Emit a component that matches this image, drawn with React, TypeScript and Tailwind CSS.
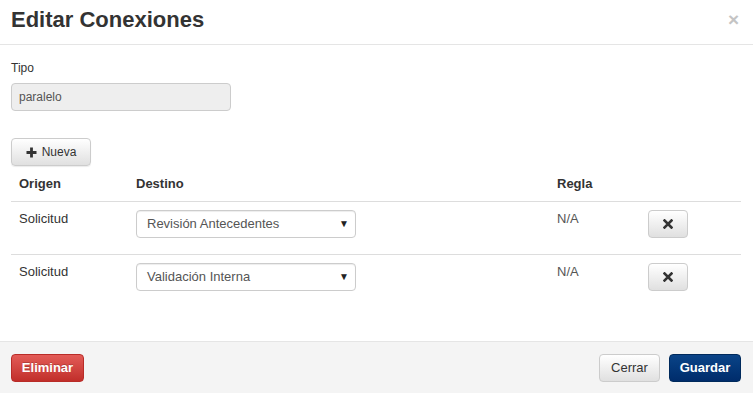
import React from 'react';

const rows = [
  { origen: 'Solicitud', destino: 'Revisión Antecedentes', regla: 'N/A' },
  { origen: 'Solicitud', destino: 'Validación Interna', regla: 'N/A' },
];

function RemoveIcon() {
  return (
    <svg width="10" height="10" viewBox="0 0 10 10">
      <path d="M1.5 1.5L8.5 8.5M8.5 1.5L1.5 8.5" stroke="#333" strokeWidth="2.6" strokeLinecap="square" />
    </svg>
  );
}

function PlusIcon() {
  return (
    <svg width="11" height="11" viewBox="0 0 11 11">
      <path d="M5.5 0.5V10.5M0.5 5.5H10.5" stroke="#333" strokeWidth="2.8" />
    </svg>
  );
}

export default function App() {
  return (
    <div
      className="w-[753px] h-[393px] bg-white flex flex-col text-[#333] overflow-hidden"
      style={{ fontFamily: '"Liberation Sans", Arial, sans-serif' }}
    >
      {/* Header */}
      <div className="h-[45px] shrink-0 border-b border-[#e5e5e5] flex items-start justify-between pl-[11px] pr-[14px] pt-[6px]">
        <h4 className="text-[22px] font-bold leading-[28px] text-[#333]">Editar Conexiones</h4>
        <span className="text-[19px] font-bold leading-[20px] text-[#c4c4c4] mt-[4px]">×</span>
      </div>

      {/* Body */}
      <div className="flex-1 px-[11px] pt-[15px]">
        <label className="block text-[12px] leading-[17px] mb-[6px]">Tipo</label>
        <div className="w-[220px] h-[28px] bg-[#eee] border border-[#ccc] rounded-[4px] px-[7px] flex items-center text-[12px] text-[#555]">
          paralelo
        </div>

        <button className="mt-[27px] w-[80px] h-[28px] rounded-[4px] border border-[#ccc] bg-gradient-to-b from-white to-[#e0e0e0] flex items-center justify-center gap-[5px] text-[12px] text-[#333] shadow-[0_1px_1px_rgba(0,0,0,0.08)]">
          <PlusIcon />
          Nueva
        </button>

        <table className="w-[730px] mt-[1px] border-collapse text-[13px]">
          <thead>
            <tr className="border-b border-[#ddd]">
              <th className="w-[117px] text-left font-bold px-[8px] h-[34px] align-middle">Origen</th>
              <th className="w-[421px] text-left font-bold px-[8px] align-middle">Destino</th>
              <th className="w-[91px] text-left font-bold px-[8px] align-middle">Regla</th>
              <th className="px-[8px]"></th>
            </tr>
          </thead>
          <tbody>
            {rows.map((r, i) => (
              <tr key={i} className={i === 0 ? 'border-b border-[#ddd]' : ''}>
                <td className="px-[8px] pt-[8px] h-[53px] align-top leading-[18px]">{r.origen}</td>
                <td className="px-[8px] pt-[8px] align-top">
                  <div className="w-[220px] h-[28px] border border-[#ccc] rounded-[4px] bg-white shadow-[inset_0_1px_1px_rgba(0,0,0,0.075)] flex items-center justify-between pl-[10px] pr-[6px] text-[13px] text-[#555]">
                    <span>{r.destino}</span>
                    <span className="text-[10px] text-[#222]">▼</span>
                  </div>
                </td>
                <td className="px-[8px] pt-[8px] align-top leading-[18px] text-[#555]">{r.regla}</td>
                <td className="px-[8px] pt-[8px] align-top">
                  <button className="w-[40px] h-[28px] rounded-[4px] border border-[#ccc] bg-gradient-to-b from-white to-[#e0e0e0] flex items-center justify-center">
                    <RemoveIcon />
                  </button>
                </td>
              </tr>
            ))}
          </tbody>
        </table>
      </div>

      {/* Footer */}
      <div className="h-[52px] shrink-0 border-t border-[#e5e5e5] bg-[#f4f4f4] flex items-center justify-between pl-[11px] pr-[12px]">
        <button className="w-[73px] h-[28px] rounded-[4px] border border-[#b92c28] bg-gradient-to-b from-[#e35b57] to-[#c12e2a] text-white text-[13px] font-bold [text-shadow:0_-1px_0_rgba(0,0,0,0.2)]">
          Eliminar
        </button>
        <div className="flex gap-[9px]">
          <button className="w-[61px] h-[28px] rounded-[4px] border border-[#ccc] bg-gradient-to-b from-white to-[#e0e0e0] text-[13px] text-[#333]">
            Cerrar
          </button>
          <button className="w-[72px] h-[28px] rounded-[4px] border border-[#002a5c] bg-gradient-to-b from-[#0b4488] to-[#002c6b] text-white text-[13px] font-bold">
            Guardar
          </button>
        </div>
      </div>
    </div>
  );
}
